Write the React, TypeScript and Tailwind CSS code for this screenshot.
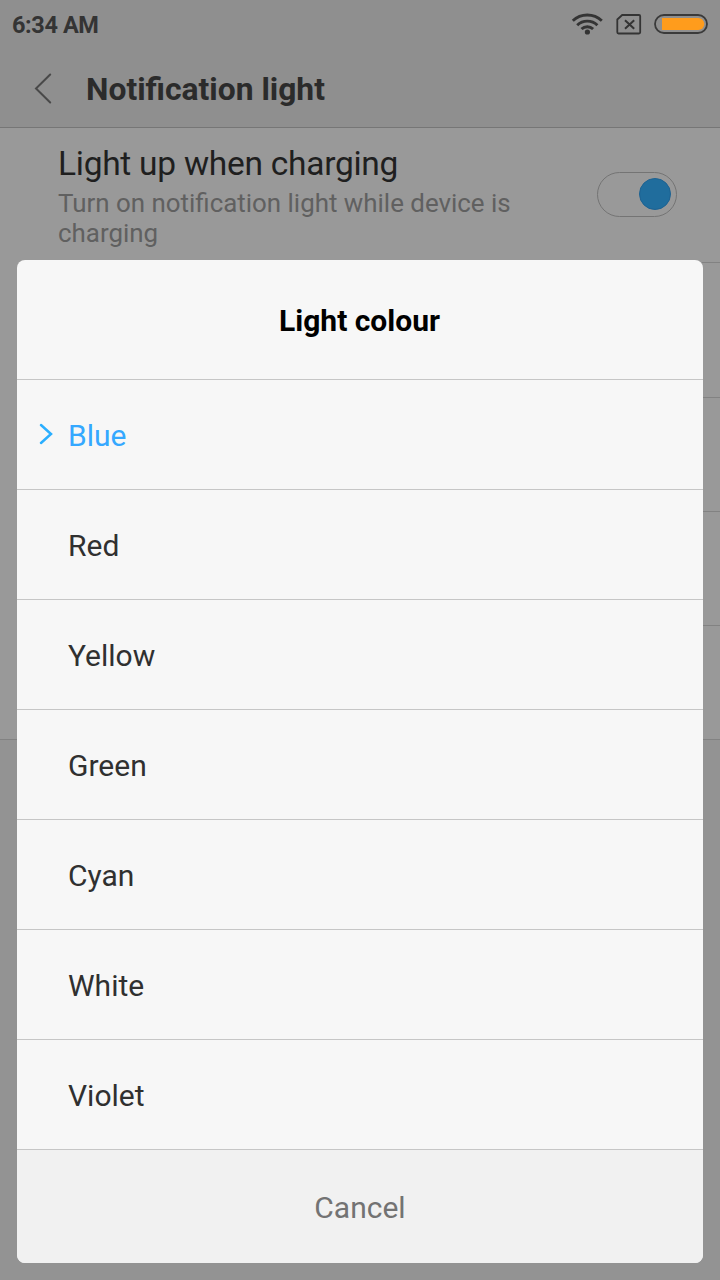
const colours = ["Blue", "Red", "Yellow", "Green", "Cyan", "White", "Violet"];

function StatusBar() {
  return (
    <div className="flex h-[50px] items-center justify-between pl-3 pr-3 text-[#343434]">
      <span className="text-[23.5px] leading-[50px] font-bold tracking-[-0.4px] whitespace-nowrap">6:34 AM</span>
      <svg className="-mr-3 h-[50px] w-[160px]" viewBox="0 0 160 50" fill="none">
        <g stroke="#343434" strokeWidth="2.9">
          <path d="M12.8 20.800a21 21 0 0 1 29 0" />
          <path d="M17.2 25.200a14.6 14.6 0 0 1 20.2 0" />
          <path d="M21.5 29a8.4 8.4 0 0 1 11.6 0" />
        </g>
        <circle cx="27.4" cy="32" r="2.6" fill="#343434" />
        <path d="M62.2 15H79a1.2 1.2 0 0 1 1.2 1.2V32.300a1.200 1.200 0 0 1-1.200 1.200H58.500a1.200 1.200 0 0 1-1.200-1.200V19.500Z" stroke="#343434" strokeWidth="1.8" />
        <path d="M65 20.300l9.200 8.500M74.200 20.300L65 28.800" stroke="#343434" strokeWidth="2" />
        <rect x="95" y="15" width="52" height="18" rx="9" stroke="#3a3a3a" strokeWidth="1.8" />
        <path d="M102 18H138.300a6 6 0 0 1 0 12H102Z" fill="#ff9c1c" />
      </svg>
    </div>
  );
}

function SettingsPage() {
  return (
    <div className="h-[1280px] bg-[#939393]">
      <header className="h-32 border-b border-[#767676] bg-[#8f8f8f]">
        <StatusBar />
        <div className="flex h-[77px] items-center">
          <svg className="ml-[34px] h-8 w-5" viewBox="0 0 20 32" fill="none">
            <path d="M16.200 1.500L2 15.500l14.200 14" stroke="#494949" strokeWidth="2" strokeLinecap="round" />
          </svg>
          <h1 className="ml-8 text-[31.8px] leading-[38px] font-bold whitespace-nowrap text-[#2b2b2b]">Notification light</h1>
        </div>
      </header>
      <main className="border-b border-[#828282] bg-[#999999]">
        <section className="ml-[58px] flex h-[135px] justify-between border-b border-[#828282] pr-[43px]">
          <div className="w-[480px] pt-4">
            <h2 className="text-[33.5px] leading-10 tracking-[-0.27px] whitespace-nowrap text-[#1f1f1f]">Light up when charging</h2>
            <p className="pt-1 text-[25.9px] leading-[30px] text-[#606060]">Turn on notification light while device is charging</p>
          </div>
          <div className="mt-11 flex h-[45px] w-20 items-start justify-end rounded-full border border-[#747474] pt-[5px] pr-[5px]">
            <div className="h-8 w-8 rounded-full border border-[#1d6292] bg-[#206d9d]" />
          </div>
        </section>
        <div className="ml-[58px] h-[135px] border-b border-[#828282]" />
        <div className="ml-[58px] h-[114px] border-b border-[#828282]" />
        <div className="ml-[58px] h-[114px] border-b border-[#828282]" />
        <div className="h-[113px]" />
      </main>
    </div>
  );
}

function ColourDialog() {
  return (
    <div role="dialog" className="absolute inset-x-[17px] bottom-[17px] overflow-hidden rounded-[8px] bg-[#f7f7f7]">
      <div className="flex h-[120px] items-center justify-center border-b border-[#c6c6c6] pt-[2px] pr-px text-[30px] font-bold text-black">
        Light colour
      </div>
      <ul>
        {colours.map((colour, index) => (
          <li
            key={colour}
            className={`flex h-[110px] items-center border-b border-[#c6c6c6] text-[30px] ${index === 0 ? "text-[#35a8ff]" : "text-[#303030]"}`}
          >
            <span className="flex w-[51px] pb-[2px] pl-[21px]">
              {index === 0 && (
                <svg className="h-6 w-4" viewBox="0 0 16 24" fill="none">
                  <path d="M3 3L13 12L3 21" stroke="#2bafff" strokeWidth="2.500" strokeLinecap="round" />
                </svg>
              )}
            </span>
            <span className="pt-px">{colour}</span>
          </li>
        ))}
      </ul>
      <button className="block h-[113px] w-full bg-[#f1f1f1] pt-[2px] text-[30px] text-[#737373]">Cancel</button>
    </div>
  );
}

export default function App() {
  return (
    <div className="relative h-[1280px] w-[720px] overflow-hidden font-[Roboto,sans-serif]">
      <SettingsPage />
      <ColourDialog />
    </div>
  );
}
